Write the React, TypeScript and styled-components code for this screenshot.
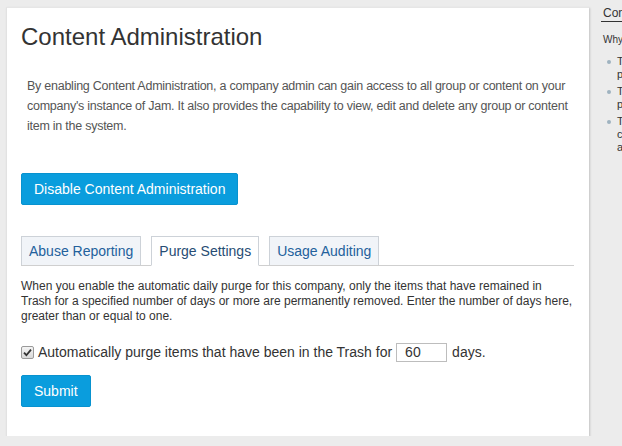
import styled, { createGlobalStyle } from "styled-components";

const GlobalStyle = createGlobalStyle`
  body {
    margin: 0;
    background: #ececec;
    font-family: "Liberation Sans", Arial, sans-serif;
    overflow: hidden;
  }
`;

const Page = styled.div`
  display: flex;
  align-items: flex-start;
  padding: 7px 0 0 6px;
  width: 900px;
`;

const Card = styled.section`
  flex: 0 0 auto;
  width: 553px;
  background: #fff;
  border-left: 1px solid #e2e2e2;
  border-top: 1px solid #e6e6e6;
  box-shadow: 1px 1px 2px rgba(0, 0, 0, 0.18);
  padding: 15px 15px 29px 14px;
`;

const Title = styled.h1`
  margin: 0;
  font-size: 24px;
  line-height: 28px;
  font-weight: normal;
  color: #333;
`;

const Intro = styled.p`
  margin: 25px 0 0 6px;
  font-size: 12.5px;
  line-height: 20px;
  letter-spacing: -0.25px;
  color: #555;
`;

const Button = styled.button`
  display: inline-flex;
  align-items: center;
  height: 32px;
  padding: 0 12px;
  border: 1px solid #0892cf;
  border-radius: 2px;
  background: #0a9ddd;
  color: #fff;
  font-family: "Liberation Sans", Arial, sans-serif;
  font-size: 14px;
  cursor: pointer;
`;

const ButtonRow = styled.div<{ $top: number }>`
  margin-top: ${(p) => p.$top}px;
`;

const TabBar = styled.div`
  display: flex;
  align-items: flex-end;
  gap: 10px;
  margin-top: 31px;
  border-bottom: 1px solid #cfcfcf;
`;

const Tab = styled.div<{ $active?: boolean }>`
  height: 28px;
  display: flex;
  align-items: center;
  padding: 0 7px;
  font-size: 14px;
  border: 1px solid #cdd2d8;
  border-bottom: ${(p) => (p.$active ? "1px solid #fff" : "none")};
  margin-bottom: ${(p) => (p.$active ? "-1px" : "0")};
  background: ${(p) => (p.$active ? "#fff" : "#f1f4f8")};
  color: ${(p) => (p.$active ? "#274d74" : "#23619c")};
`;

const Note = styled.p`
  margin: 13px 0 0 0;
  font-size: 12px;
  line-height: 15px;
  color: #333;
`;

const OptionRow = styled.label`
  display: flex;
  align-items: center;
  height: 20px;
  margin-top: 18px;
  font-size: 14px;
  color: #333;
`;

const CheckBox = styled.span`
  width: 11px;
  height: 11px;
  border: 1px solid #9a9a9a;
  border-radius: 2px;
  background: linear-gradient(#f4f4f4, #d9d9d9);
  margin-right: 4px;
  display: flex;
  align-items: center;
  justify-content: center;
`;

const DaysInput = styled.input`
  margin: 0 5px 0 4px;
  padding: 0 0 0 8px;
  box-sizing: border-box;
  width: 51px;
  height: 19px;
  border: 1px solid #bdbdbd;
  font-family: "Liberation Sans", Arial, sans-serif;
  font-size: 14px;
  color: #333;
`;

const Sidebar = styled.aside`
  flex: 0 0 auto;
  width: 150px;
  margin: -7px 0 0 12px;
  padding-top: 6px;
  color: #333;
`;

const SideTitle = styled.h3`
  margin: 0;
  font-size: 12px;
  line-height: 14px;
  font-weight: normal;
  padding: 0 0 1px 2px;
  border-bottom: 1px solid #333;
`;

const SideLead = styled.p`
  margin: 12px 0 0 2px;
  font-size: 10px;
  line-height: 12px;
`;

const SideList = styled.ul`
  margin: 9px 0 0 0;
  padding: 0;
  list-style: none;
  font-size: 11px;
  line-height: 13px;
`;

const SideItem = styled.li`
  position: relative;
  padding-left: 16px;
  margin-bottom: 4px;
  &::before {
    content: "";
    position: absolute;
    left: 6px;
    top: 5px;
    width: 4px;
    height: 4px;
    border-radius: 50%;
    background: #9fb3c0;
  }
`;

export default function App() {
  return (
    <Page>
      <GlobalStyle />
      <Card>
        <Title>Content Administration</Title>
        <Intro>
          By enabling Content Administration, a company admin can gain access to all group or content on your
          company's instance of Jam. It also provides the capability to view, edit and delete any group or content
          item in the system.
        </Intro>
        <ButtonRow $top={37}>
          <Button>Disable Content Administration</Button>
        </ButtonRow>
        <TabBar>
          <Tab>Abuse Reporting</Tab>
          <Tab $active>Purge Settings</Tab>
          <Tab>Usage Auditing</Tab>
        </TabBar>
        <Note>
          When you enable the automatic daily purge for this company, only the items that have remained in
          Trash for a specified number of days or more are permanently removed. Enter the number of days here,
          greater than or equal to one.
        </Note>
        <OptionRow>
          <CheckBox>
            <svg width="9" height="9" viewBox="0 0 9 9">
              <path d="M1 4.6 L3.4 7.2 L8 1.6" fill="none" stroke="#333" strokeWidth="1.8" />
            </svg>
          </CheckBox>
          Automatically purge items that have been in the Trash for
          <DaysInput defaultValue="60" />
          days.
        </OptionRow>
        <ButtonRow $top={13}>
          <Button>Submit</Button>
        </ButtonRow>
      </Card>
      <Sidebar>
        <SideTitle>Content Administration</SideTitle>
        <SideLead>Why enable it?</SideLead>
        <SideList>
          <SideItem>
            To review reported content
            <br />
            purge deleted items.
          </SideItem>
          <SideItem>
            To audit usage across the
            <br />
            platform.
          </SideItem>
          <SideItem>
            To manage any group or
            <br />
            content item
            <br />
            across the company.
          </SideItem>
        </SideList>
      </Sidebar>
    </Page>
  );
}
